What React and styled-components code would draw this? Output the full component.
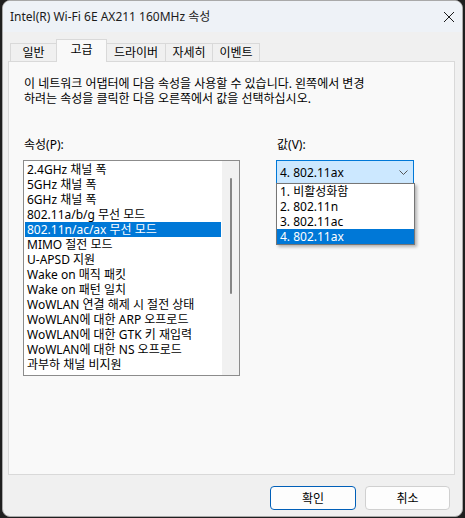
import React from "react";
import styled, { createGlobalStyle } from "styled-components";

const GlobalStyle = createGlobalStyle`
  html, body {
    margin: 0;
    padding: 0;
    background: #1f1f1f;
  }
  body {
    font-family: "Noto Sans", "Noto Sans CJK KR", sans-serif;
    font-size: 12px;
    color: #000;
  }
  #root {
    width: 465px;
    height: 518px;
    overflow: hidden;
  }
`;

const Window = styled.div`
  box-sizing: border-box;
  width: 461px;
  height: 517px;
  margin-left: 2px;
  border: 1px solid #a9a9a9;
  border-radius: 8px;
  overflow: hidden;
  background: #f0f0f0;
  display: flex;
  flex-direction: column;
`;

const TitleBar = styled.div`
  height: 31px;
  flex: none;
  display: flex;
  align-items: center;
  justify-content: space-between;
  padding: 0 7px 0 7px;
  background: #eef2f7;
  color: #1b1b1b;
`;

const Title = styled.span`
  font-size: 12px;
  line-height: 16px;
`;

const CloseGlyph = styled.span`
  display: flex;
  width: 12px;
  height: 12px;
`;

const Body = styled.div`
  flex: 1;
  display: flex;
  flex-direction: column;
  padding: 7px 7px 0 5px;
`;

const TabStrip = styled.div`
  display: flex;
  align-items: flex-end;
  height: 23px;
  padding-left: 2px;
  margin-bottom: -1px;
  position: relative;
  z-index: 1;
`;

const Tab = styled.div`
  box-sizing: border-box;
  width: ${(p) => p.$w}px;
  height: ${(p) => (p.$active ? 23 : 19)}px;
  margin-left: -1px;
  border: 1px solid #d9d9d9;
  border-bottom: ${(p) => (p.$active ? "none" : "1px solid #d9d9d9")};
  background: ${(p) => (p.$active ? "#f9f9f9" : "#f0f0f0")};
  display: flex;
  justify-content: center;
  align-items: ${(p) => (p.$active ? "flex-start" : "center")};
  padding-top: ${(p) => (p.$active ? 2 : 0)}px;
  line-height: 15px;
  position: relative;
  z-index: ${(p) => (p.$active ? 2 : 1)};
  &:first-child {
    margin-left: 0;
  }
`;

const Panel = styled.div`
  box-sizing: border-box;
  height: 414px;
  flex: none;
  border: 1px solid #d9d9d9;
  background: #f9f9f9;
  padding: 14px 14px 0 14px;
`;

const Intro = styled.p`
  margin: 0 0 0 1px;
  line-height: 15px;
  white-space: nowrap;
`;

const Columns = styled.div`
  display: grid;
  grid-template-columns: 217px 138px;
  column-gap: 36px;
  margin-top: 31px;
`;

const Column = styled.div`
  display: flex;
  flex-direction: column;
`;

const FieldLabel = styled.label`
  line-height: 15px;
  margin: 0 0 8px 1px;
`;

const ListBox = styled.div`
  box-sizing: border-box;
  height: 216px;
  border: 1px solid #8c8c8c;
  background: #fff;
  display: flex;
`;

const ItemList = styled.ul`
  list-style: none;
  margin: 0;
  padding: 1px;
  flex: 1;
`;

const Item = styled.li`
  height: 15px;
  line-height: 15px;
  padding-left: 2px;
  white-space: nowrap;
  background: ${(p) => (p.$selected ? "#0078d7" : "transparent")};
  color: ${(p) => (p.$selected ? "#fff" : "#000")};
`;

const ScrollTrack = styled.div`
  width: 17px;
  flex: none;
  background: #f1f1f1;
  display: flex;
  justify-content: center;
  padding-top: 17px;
  box-sizing: border-box;
`;

const ScrollThumb = styled.div`
  width: 2px;
  height: 116px;
  border-radius: 1px;
  background: #858585;
`;

const ComboWrap = styled.div`
  position: relative;
`;

const Combo = styled.div`
  box-sizing: border-box;
  height: 24px;
  border: 1px solid #0078d7;
  background: #cce8ff;
  display: flex;
  align-items: center;
  justify-content: space-between;
  padding: 0 5px 0 3px;
  line-height: 15px;
`;

const Chevron = styled.span`
  display: flex;
  width: 9px;
  height: 5px;
`;

const DropList = styled.ul`
  position: absolute;
  top: 23px;
  left: 0;
  box-sizing: border-box;
  width: 139px;
  margin: 0;
  padding: 0;
  list-style: none;
  border: 1px solid #767676;
  background: #fff;
  box-shadow: 2px 2px 3px rgba(0, 0, 0, 0.28);
`;

const DropOption = styled.li`
  height: 15px;
  line-height: 15px;
  padding-left: 3px;
  background: ${(p) => (p.$selected ? "#0078d7" : "transparent")};
  color: ${(p) => (p.$selected ? "#fff" : "#000")};
`;

const Footer = styled.div`
  display: flex;
  justify-content: flex-end;
  gap: 9px;
  padding: 11px 5px 0 0;
`;

const Button = styled.button`
  box-sizing: border-box;
  width: ${(p) => p.$w}px;
  height: 24px;
  border-radius: 4px;
  border: 1px solid ${(p) => (p.$default ? "#005fb8" : "#d0d0d0")};
  background: #fdfdfd;
  font: inherit;
  font-size: 12px;
  color: #000;
  padding: 0;
`;

const tabs = [
  { label: "일반", w: 47 },
  { label: "고급", w: 51, active: true },
  { label: "드라이버", w: 60 },
  { label: "자세히", w: 48 },
  { label: "이벤트", w: 48 },
];

const properties = [
  "2.4GHz 채널 폭",
  "5GHz 채널 폭",
  "6GHz 채널 폭",
  "802.11a/b/g 무선 모드",
  "802.11n/ac/ax 무선 모드",
  "MIMO 절전 모드",
  "U-APSD 지원",
  "Wake on 매직 패킷",
  "Wake on 패턴 일치",
  "WoWLAN 연결 해제 시 절전 상태",
  "WoWLAN에 대한 ARP 오프로드",
  "WoWLAN에 대한 GTK 키 재입력",
  "WoWLAN에 대한 NS 오프로드",
  "과부하 채널 비지원",
];

const values = ["1. 비활성화함", "2. 802.11n", "3. 802.11ac", "4. 802.11ax"];

export default function App() {
  const selectedProp = 4;
  const selectedValue = 3;
  return (
    <>
      <GlobalStyle />
      <Window>
        <TitleBar>
          <Title>Intel(R) Wi-Fi 6E AX211 160MHz 속성</Title>
          <CloseGlyph>
            <svg width="12" height="12" viewBox="0 0 12 12">
              <path d="M1 1L11 11M11 1L1 11" stroke="#1b1b1b" strokeWidth="1" fill="none" />
            </svg>
          </CloseGlyph>
        </TitleBar>
        <Body>
          <TabStrip>
            {tabs.map((t) => (
              <Tab key={t.label} $w={t.w} $active={t.active}>
                {t.label}
              </Tab>
            ))}
          </TabStrip>
          <Panel>
            <Intro>
              이 네트워크 어댑터에 다음 속성을 사용할 수 있습니다. 왼쪽에서 변경
              <br />
              하려는 속성을 클릭한 다음 오른쪽에서 값을 선택하십시오.
            </Intro>
            <Columns>
              <Column>
                <FieldLabel>속성(P):</FieldLabel>
                <ListBox>
                  <ItemList>
                    {properties.map((p, i) => (
                      <Item key={p} $selected={i === selectedProp}>
                        {p}
                      </Item>
                    ))}
                  </ItemList>
                  <ScrollTrack>
                    <ScrollThumb />
                  </ScrollTrack>
                </ListBox>
              </Column>
              <Column>
                <FieldLabel>값(V):</FieldLabel>
                <ComboWrap>
                  <Combo>
                    <span>{values[selectedValue]}</span>
                    <Chevron>
                      <svg width="9" height="5" viewBox="0 0 9 5">
                        <path d="M0.5 0.5L4.5 4.5L8.5 0.5" stroke="#555" strokeWidth="1" fill="none" />
                      </svg>
                    </Chevron>
                  </Combo>
                  <DropList>
                    {values.map((v, i) => (
                      <DropOption key={v} $selected={i === selectedValue}>
                        {v}
                      </DropOption>
                    ))}
                  </DropList>
                </ComboWrap>
              </Column>
            </Columns>
          </Panel>
          <Footer>
            <Button $w={86} $default>
              확인
            </Button>
            <Button $w={85}>취소</Button>
          </Footer>
        </Body>
      </Window>
    </>
  );
}
